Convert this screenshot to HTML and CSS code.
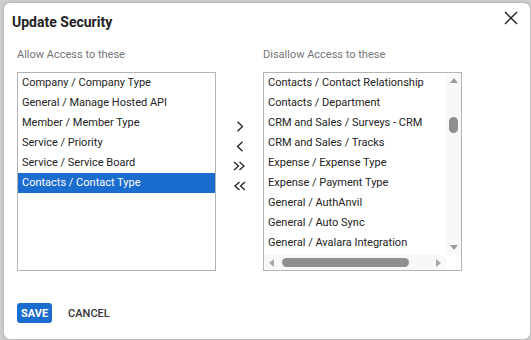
FILE: index.html
```html
<!DOCTYPE html>
<html lang="en">
<head>
    <meta charset="UTF-8">
    <meta name="viewport" content="width=device-width, initial-scale=1.0">
    <title>Update Security</title>
    <link rel="stylesheet" href="styles.css">
</head>
<body>

    <div class="dialog">
        <div class="dialog-header">
            <h1>Update Security</h1>
            <button class="close-btn" title="Close">
                <svg width="14" height="14" viewBox="0 0 14 14"><path d="M1 1 L13 13 M13 1 L1 13" stroke="#222" stroke-width="1.4" fill="none"/></svg>
            </button>
        </div>

        <div class="transfer">
            <label class="list-label">Allow Access to these</label>
            <div></div>
            <label class="list-label">Disallow Access to these</label>

            <div class="listbox">
                <div class="item">Company / Company Type</div>
                <div class="item">General / Manage Hosted API</div>
                <div class="item">Member / Member Type</div>
                <div class="item">Service / Priority</div>
                <div class="item">Service / Service Board</div>
                <div class="item selected">Contacts / Contact Type</div>
            </div>

            <div class="mover">
                <button class="move-btn" title="Move right">
                    <svg width="8" height="11" viewBox="0 0 8 11"><path d="M1.5 0.8 L6.5 5.5 L1.5 10.2" stroke="#222" stroke-width="1.3" fill="none"/></svg>
                </button>
                <button class="move-btn" title="Move left">
                    <svg width="8" height="11" viewBox="0 0 8 11"><path d="M6.5 0.8 L1.5 5.5 L6.5 10.2" stroke="#222" stroke-width="1.3" fill="none"/></svg>
                </button>
                <button class="move-btn" title="Move all right">
                    <svg width="13" height="10" viewBox="0 0 13 10"><path d="M1 1 L5.5 5 L1 9 M6.5 1 L11 5 L6.5 9" stroke="#222" stroke-width="1.3" fill="none"/></svg>
                </button>
                <button class="move-btn" title="Move all left">
                    <svg width="13" height="10" viewBox="0 0 13 10"><path d="M12 1 L7.5 5 L12 9 M6.5 1 L2 5 L6.5 9" stroke="#222" stroke-width="1.3" fill="none"/></svg>
                </button>
            </div>

            <div class="listbox scroll-box">
                <div class="list-view">
                    <div class="item">Contacts / Contact Relationship</div>
                    <div class="item">Contacts / Department</div>
                    <div class="item">CRM and Sales / Surveys - CRM</div>
                    <div class="item">CRM and Sales / Tracks</div>
                    <div class="item">Expense / Expense Type</div>
                    <div class="item">Expense / Payment Type</div>
                    <div class="item">General / AuthAnvil</div>
                    <div class="item">General / Auto Sync</div>
                    <div class="item">General / Avalara Integration</div>
                </div>
                <div class="vscroll">
                    <div class="sb-btn"><span class="tri tri-up"></span></div>
                    <div class="vthumb"></div>
                    <div class="sb-fill"></div>
                    <div class="sb-btn"><span class="tri tri-down"></span></div>
                </div>
                <div class="hscroll">
                    <div class="sb-btn"><span class="tri tri-left"></span></div>
                    <div class="hthumb"></div>
                    <div class="sb-fill"></div>
                    <div class="sb-btn"><span class="tri tri-right"></span></div>
                </div>
                <div class="sb-corner"></div>
            </div>
        </div>

        <div class="dialog-footer">
            <button class="btn-save">SAVE</button>
            <button class="btn-cancel">CANCEL</button>
        </div>
    </div>

</body>
</html>
```

FILE: styles.css
```css
body {
    margin: 0;
    height: 340px;
    overflow: hidden;
    background-color: #cdcdcd;
    font-family: Roboto, "Liberation Sans", Arial, sans-serif;
    color: #222;
}
button {
    font-family: inherit;
    cursor: pointer;
}
.dialog {
    margin: 3px 1px 0 4px;
    height: 336px;
    box-sizing: border-box;
    padding: 9px 12px 0 8px;
    background-color: #fff;
    border-radius: 6px;
    box-shadow: 0 0 0 1px #bdbdbd, 0 0 3px rgba(0, 0, 0, 0.25);
}
.dialog-header {
    display: flex;
    justify-content: space-between;
    align-items: flex-start;
    height: 20px;
}
h1 {
    margin: 0;
    font-size: 14px;
    line-height: 20px;
    font-weight: 700;
    color: #222;
}
.close-btn {
    margin-top: -1px;
    padding: 0;
    border: none;
    background: none;
    width: 14px;
    height: 14px;
    display: flex;
}
.transfer {
    display: grid;
    grid-template-columns: 199px 47px 199px;
    grid-template-rows: 14px 199px;
    row-gap: 10px;
    margin: 16px 0 0 5px;
}
.list-label {
    font-size: 11px;
    line-height: 14px;
    color: #757575;
}
.listbox {
    border: 1px solid #b4b4b4;
    overflow: hidden;
    font-size: 11px;
    line-height: 20px;
}
.item {
    padding-left: 4px;
    height: 20px;
    white-space: nowrap;
    color: #222;
}
.item.selected {
    background-color: #1b6ccf;
    color: #fff;
}
.mover {
    display: flex;
    flex-direction: column;
    align-items: center;
    padding-top: 44px;
}
.move-btn {
    width: 20px;
    height: 20px;
    padding: 0;
    border: none;
    background: none;
    display: flex;
    align-items: center;
    justify-content: center;
}
.scroll-box {
    display: grid;
    grid-template-columns: 1fr 15px;
    grid-template-rows: 1fr 15px;
}
.list-view {
    overflow: hidden;
}
.vscroll,
.hscroll {
    display: flex;
    background-color: #f8f8f8;
}
.vscroll {
    flex-direction: column;
}
.sb-btn {
    width: 15px;
    height: 15px;
    flex-shrink: 0;
    display: flex;
    align-items: center;
    justify-content: center;
}
.sb-fill {
    flex: 1;
}
.vthumb {
    margin: 29px auto 0;
    width: 9px;
    height: 16px;
    border-radius: 5px;
    background-color: #8f8f8f;
}
.hthumb {
    margin: 3px 0 0 3px;
    width: 127px;
    height: 9px;
    border-radius: 5px;
    background-color: #8f8f8f;
}
.sb-corner {
    background-color: #fff;
}
.tri {
    width: 0;
    height: 0;
}
.tri-up {
    border-left: 4px solid transparent;
    border-right: 4px solid transparent;
    border-bottom: 5px solid #9c9c9c;
}
.tri-down {
    border-left: 4px solid transparent;
    border-right: 4px solid transparent;
    border-top: 5px solid #9c9c9c;
}
.tri-left {
    border-top: 4px solid transparent;
    border-bottom: 4px solid transparent;
    border-right: 5px solid #a8a8a8;
}
.tri-right {
    border-top: 4px solid transparent;
    border-bottom: 4px solid transparent;
    border-left: 5px solid #a8a8a8;
}
.dialog-footer {
    display: flex;
    align-items: center;
    gap: 16px;
    margin: 32px 0 0 5px;
}
.btn-save {
    height: 20px;
    padding: 0 4px;
    border: none;
    border-radius: 3px;
    background-color: #1b6ccf;
    color: #fff;
    font-size: 11px;
    font-weight: 700;
}
.btn-cancel {
    height: 20px;
    padding: 0;
    border: none;
    background: none;
    color: #333;
    font-size: 11px;
    font-weight: 500;
}
```
